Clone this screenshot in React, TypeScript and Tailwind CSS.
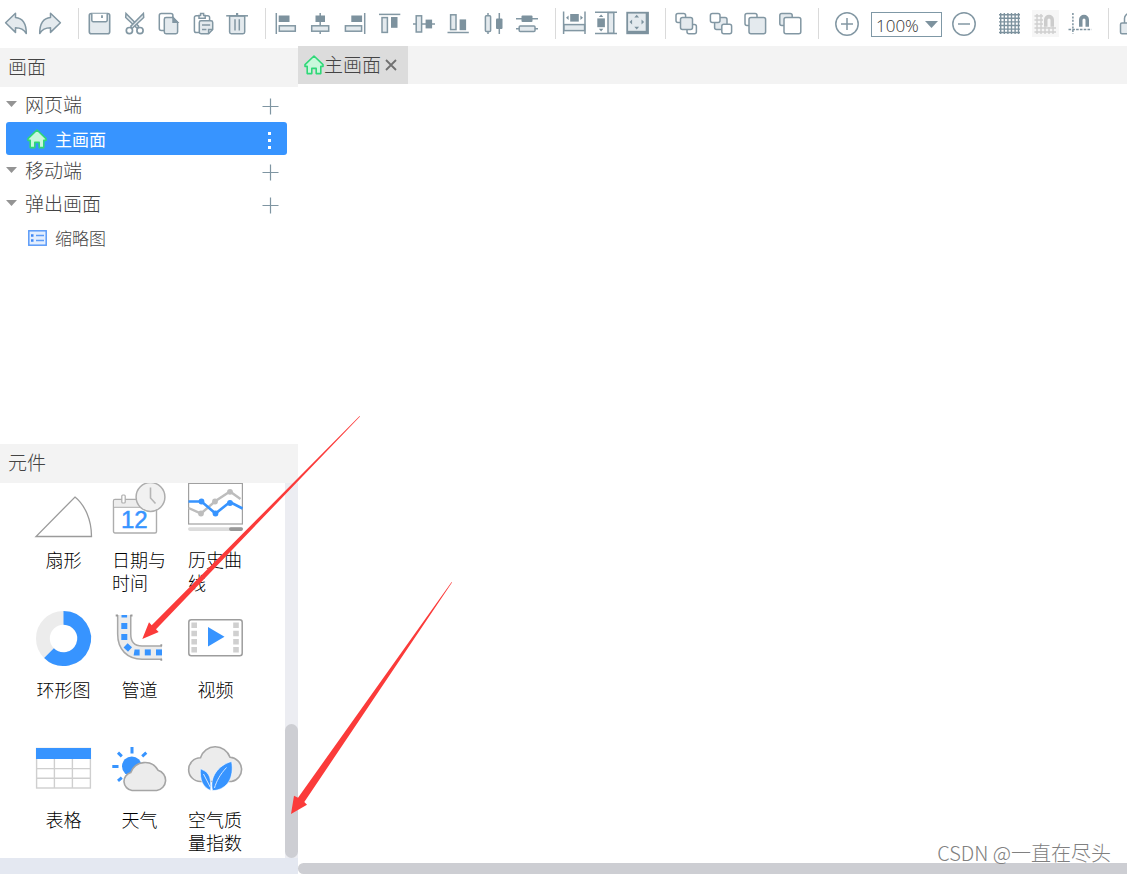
import React, { useState } from 'react';

const LINE = '#8297a3';
const SOFT = '#e4eaee';
const DARK = '#7d929e';

interface IconProps {
  children: React.ReactNode;
}

const Icon: React.FC<IconProps> = ({ children }) => (
  <svg
    viewBox="0 0 24 24"
    className="block h-6 w-6 overflow-visible"
    fill="none"
    stroke={LINE}
    strokeWidth="1.5"
    aria-hidden="true"
  >
    {children}
  </svg>
);

interface Tool {
  label: string;
  icon: React.ReactNode;
  disabled?: boolean;
}

const ARROW = 'M11.5 2.2V6.6C18 7.2 22.3 12 22.3 22.6C20 18.6 16.5 16.8 11.5 16.8V21.4L1.6 11.8Z';
const MAGNET = 'M11 15.7V8.7a5 5 0 0 1 10 0V15.7H17.5V9a1.5 1.5 0 0 0-3 0V15.7Z';

const historyTools: Tool[] = [
  { label: '撤销', icon: <path d={ARROW} fill={SOFT} strokeLinejoin="round" /> },
  { label: '重做', icon: <path d={ARROW} fill={SOFT} strokeLinejoin="round" transform="matrix(-1 0 0 1 24 0)" /> },
];

const editTools: Tool[] = [
  {
    label: '保存',
    icon: (
      <>
        <rect x="2.3" y="2.5" width="20.4" height="20.3" rx="2" fill={SOFT} strokeWidth="1.6" />
        <path d="M4.8 2.7V9.3a1.4 1.4 0 0 0 1.4 1.4H18.8a1.4 1.4 0 0 0 1.4-1.4V2.7" fill="#fff" />
        <path d="M15 4.2V7" strokeWidth="1.8" />
      </>
    ),
  },
  {
    label: '剪切',
    icon: (
      <>
        <path d="M4 2.4L3.7 6.5L15.6 17.8L16.6 15.2Z" fill={SOFT} />
        <path d="M21.4 2.4L21.7 6.5L9.8 17.8L8.8 15.2Z" fill={SOFT} />
        <circle cx="7.4" cy="19.6" r="3.1" fill="#fff" strokeWidth="1.7" />
        <circle cx="18" cy="19.6" r="3.1" fill="#fff" strokeWidth="1.7" />
      </>
    ),
  },
  {
    label: '复制',
    icon: (
      <>
        <rect x="3.3" y="2.5" width="13.6" height="17" rx="2" fill="#fff" />
        <path d="M10 6.6H17L21.6 11.2V21a1.7 1.7 0 0 1-1.7 1.7H10A1.7 1.7 0 0 1 8.3 21V8.3A1.7 1.7 0 0 1 10 6.6Z" fill={SOFT} />
        <path d="M17 6.6V11.2H21.6Z" fill={LINE} />
      </>
    ),
  },
  {
    label: '粘贴',
    icon: (
      <>
        <path d="M8.3 21.5H5.2A1.8 1.8 0 0 1 3.4 19.7V6.5A1.8 1.8 0 0 1 5.2 4.7H16.8A1.8 1.8 0 0 1 18.6 6.5V9.5" fill="#fff" />
        <path d="M8 7.3V4.6H9.6V2.6H12.6V4.6H14.2V7.3Z" fill="#fff" />
        <path d="M10 9.8H20a1.7 1.7 0 0 1 1.7 1.7V18.5L17.6 22.7H10A1.7 1.7 0 0 1 8.3 21V11.5A1.7 1.7 0 0 1 10 9.8Z" fill={SOFT} />
        <path d="M11 14H19.2M11 18.4H15.4M21.7 18.5H17.6V22.7" />
      </>
    ),
  },
  {
    label: '删除',
    icon: (
      <>
        <path d="M4.6 5V21a1.7 1.7 0 0 0 1.7 1.7H18A1.7 1.7 0 0 0 19.7 21V5Z" fill={SOFT} />
        <path d="M1.2 4.8H23" />
        <path d="M12.1 2V5" strokeWidth="2.2" />
        <path d="M10 8.3V19.6M14.3 8.3V19.6" />
      </>
    ),
  },
];

const alignTools: Tool[] = [
  {
    label: '左对齐',
    icon: (
      <>
        <path d="M2.3 2V23" />
        <rect x="4.7" y="4.5" width="10.8" height="6.5" fill={DARK} stroke="none" />
        <rect x="5.3" y="14.8" width="16" height="5.4" fill={SOFT} />
      </>
    ),
  },
  {
    label: '水平居中',
    icon: (
      <>
        <path d="M12.2 2V23" />
        <rect x="7.5" y="4.5" width="9.5" height="6.5" fill={DARK} stroke="none" />
        <rect x="3.7" y="14.8" width="17" height="5.4" fill={SOFT} />
      </>
    ),
  },
  {
    label: '右对齐',
    icon: (
      <>
        <path d="M21.7 2V23" />
        <rect x="8.3" y="4.5" width="10.8" height="6.5" fill={DARK} stroke="none" />
        <rect x="2.4" y="14.8" width="16.2" height="5.4" fill={SOFT} />
      </>
    ),
  },
  {
    label: '顶对齐',
    icon: (
      <>
        <path d="M2 3.4H23.3" />
        <rect x="5" y="6.6" width="5.4" height="14.8" fill={SOFT} />
        <rect x="14" y="6" width="6.5" height="10.8" fill={DARK} stroke="none" />
      </>
    ),
  },
  {
    label: '垂直居中',
    icon: (
      <>
        <path d="M1 13H23" />
        <rect x="4.2" y="4.8" width="5.4" height="16.2" fill={SOFT} />
        <rect x="13.6" y="8.6" width="6.5" height="8.8" fill={DARK} stroke="none" />
      </>
    ),
  },
  {
    label: '底对齐',
    icon: (
      <>
        <path d="M1.5 21.5H22.8" />
        <rect x="4.6" y="3.8" width="5.4" height="14.8" fill={SOFT} />
        <rect x="13.6" y="8.4" width="6.5" height="10.8" fill={DARK} stroke="none" />
      </>
    ),
  },
  {
    label: '水平分布',
    icon: (
      <>
        <path d="M7 2V23M18.3 2V23" />
        <rect x="4.4" y="4.8" width="5.2" height="15.6" rx="1" fill={SOFT} />
        <rect x="15" y="7.5" width="6.5" height="10.6" rx="1" fill={DARK} stroke="none" />
      </>
    ),
  },
  {
    label: '垂直分布',
    icon: (
      <>
        <path d="M1 7.8H23M1 17.7H23" />
        <rect x="6.5" y="4.6" width="11" height="6.4" rx="1" fill={DARK} stroke="none" />
        <rect x="4.2" y="15" width="15.8" height="5.4" rx="1" fill={SOFT} />
      </>
    ),
  },
];

const sizeTools: Tool[] = [
  {
    label: '等宽',
    icon: (
      <>
        <path d="M1.6 0.5V23M23 0.5V23" />
        <rect x="8.2" y="3" width="8.6" height="7.6" fill={DARK} stroke="none" />
        <path d="M4 6.8L6.6 4.6V9ZM21 6.8L18.4 4.6V9Z" fill={DARK} stroke="none" />
        <rect x="2" y="13.6" width="20.6" height="6" fill={SOFT} />
      </>
    ),
  },
  {
    label: '等高',
    icon: (
      <>
        <path d="M1 1.2H23M1 22.5H23" />
        <rect x="3.3" y="7.4" width="7.6" height="8.8" fill={DARK} stroke="none" />
        <path d="M7.1 3.4L9.3 6H4.9ZM7.1 20.4L9.3 17.7H4.9Z" fill={DARK} stroke="none" />
        <rect x="14" y="1.6" width="5.8" height="20.6" fill={SOFT} />
      </>
    ),
  },
  {
    label: '等宽等高',
    icon: (
      <>
        <rect x="0.3" y="0.8" width="22.6" height="22.4" fill={DARK} stroke="none" />
        <rect x="2.1" y="2.6" width="17.6" height="17.2" fill={SOFT} stroke="none" />
        <path
          d="M10.7 3.8L13.1 6.4H8.3ZM10.7 18.4L13.1 15.8H8.3ZM3.5 11L6.1 8.6V13.4ZM18.1 11L15.5 8.6V13.4Z"
          fill={DARK}
          stroke="none"
        />
      </>
    ),
  },
];

const layerTools: Tool[] = [
  {
    label: '上移一层',
    icon: (
      <>
        <rect x="2" y="2.4" width="9.6" height="9.2" rx="2" fill="#fff" />
        <rect x="13" y="13.5" width="9.4" height="9.2" rx="2" fill="#fff" />
        <rect x="6.5" y="6.6" width="12" height="12" rx="2" fill={SOFT} />
      </>
    ),
  },
  {
    label: '下移一层',
    icon: (
      <>
        <rect x="5.6" y="6.6" width="12.4" height="12" rx="2" fill={SOFT} />
        <rect x="1.4" y="2.4" width="9.6" height="9.2" rx="2" fill="#fff" />
        <rect x="12.8" y="13.3" width="9.8" height="9.4" rx="2" fill="#fff" />
      </>
    ),
  },
  {
    label: '置于顶层',
    icon: (
      <>
        <rect x="2" y="2.4" width="12" height="12" rx="2" fill="#fff" />
        <rect x="6" y="6.6" width="16.6" height="16.2" rx="2" fill={SOFT} />
      </>
    ),
  },
  {
    label: '置于底层',
    icon: (
      <>
        <rect x="1.8" y="2.4" width="12.4" height="12" rx="2" fill={SOFT} />
        <rect x="6" y="6.6" width="16.8" height="16.2" rx="2" fill="#fff" />
      </>
    ),
  },
];

const gridTools: Tool[] = [
  {
    label: '网格',
    icon: (
      <path
        d="M3.7 2V23M7.3 2V23M10.9 2V23M14.5 2V23M18.1 2V23M21.5 2V23M2 3.7H23M2 7.3H23M2 10.9H23M2 14.5H23M2 18.1H23M2 21.5H23"
        stroke={DARK}
        strokeWidth="1.4"
      />
    ),
  },
  {
    label: '吸附网格',
    disabled: true,
    icon: (
      <>
        <rect x="-1" y="-1" width="27" height="27" fill="#f6f6f6" stroke="none" />
        <path
          d="M4 3V23M8 3V23M12 16V23M16 16V23M20 16V23M1.5 5H10M1.5 9H10M1.5 13H10M1.5 17H23M1.5 21H23"
          stroke="#cfcfcf"
          strokeWidth="1.4"
        />
        <path d={MAGNET} fill="#cccccc" stroke="none" />
      </>
    ),
  },
  {
    label: '吸附对齐',
    icon: (
      <>
        <path d="M4.9 2V23" strokeDasharray="2 1.4" stroke={DARK} />
        <path d="M0.5 18.5H23.5" strokeDasharray="2.6 1.2" stroke={DARK} />
        <path d={MAGNET} fill={DARK} stroke="none" />
      </>
    ),
  },
];

const ToolGroup: React.FC<{ tools: Tool[]; className: string }> = ({ tools, className }) => (
  <div className={`flex shrink-0 items-center justify-between ${className}`}>
    {tools.map((tool) => (
      <button key={tool.label} type="button" aria-label={tool.label} disabled={tool.disabled} className="shrink-0">
        <Icon>{tool.icon}</Icon>
      </button>
    ))}
  </div>
);

const Divider: React.FC<{ className: string }> = ({ className }) => (
  <div className={`h-[31px] w-px shrink-0 bg-[#dadada] ${className}`} />
);

const Toolbar: React.FC = () => {
  const [zoom, setZoom] = useState('100%');

  return (
    <header className="flex h-[46px] shrink-0 items-center overflow-hidden pl-1">
      <ToolGroup tools={historyTools} className="w-[58px]" />
      <Divider className="mr-2 ml-4" />
      <ToolGroup tools={editTools} className="w-[162px]" />
      <Divider className="mr-2 ml-4" />
      <ToolGroup tools={alignTools} className="w-[265px]" />
      <Divider className="mr-1.5 ml-4" />
      <ToolGroup tools={sizeTools} className="w-[88px]" />
      <Divider className="mr-2 ml-[15px]" />
      <ToolGroup tools={layerTools} className="w-[128px]" />
      <Divider className="mr-4 ml-4" />

      {/* 缩放 */}
      <button type="button" aria-label="放大" className="shrink-0">
        <Icon>
          <circle cx="12" cy="13" r="11.2" />
          <path d="M6 13H18M12 7V19" />
        </Icon>
      </button>
      <div className="relative mx-3 mt-[3px] shrink-0">
        <select
          aria-label="缩放比例"
          value={zoom}
          onChange={(e) => setZoom(e.target.value)}
          className="block h-[25px] w-[71px] appearance-none border border-[#7f98a6] bg-white pl-1 font-['Open_Sans','Noto_Sans',sans-serif] text-[17px] leading-[25px] font-light text-[#333]"
        >
          <option>50%</option>
          <option>100%</option>
          <option>200%</option>
        </select>
        <svg viewBox="0 0 13 7" className="pointer-events-none absolute top-[9px] right-1 h-[7px] w-[13px]">
          <path d="M0 0H13L6.5 7Z" fill={DARK} />
        </svg>
      </div>
      <button type="button" aria-label="缩小" className="-ml-0.5 shrink-0">
        <Icon>
          <circle cx="12" cy="13" r="11.2" />
          <path d="M6 13H18" />
        </Icon>
      </button>

      <ToolGroup tools={gridTools} className="ml-[21px] w-[95px]" />
      <Divider className="mr-2.5 ml-4" />
      <button type="button" aria-label="锁定" className="shrink-0">
        <Icon>
          <rect x="1.5" y="12" width="20" height="10.8" rx="1.5" fill={SOFT} />
          <path d="M5.5 12V7.5a5 5 0 0 1 10 0" />
        </Icon>
      </button>
    </header>
  );
};

const HomeIcon: React.FC = () => (
  <svg viewBox="0 0 20 20" className="block h-5 w-5 shrink-0" aria-hidden="true">
    <path
      d="M10 1L19 9.6V11.4H16.8V18.6H12.2V13.4H7.8V18.6H3.2V11.4H1V9.6Z"
      fill="#c9f8dc"
      stroke="#2fd878"
      strokeWidth="1.6"
      strokeLinejoin="round"
    />
  </svg>
);

const PanelTitle: React.FC<{ title: string }> = ({ title }) => (
  <h2 className="h-[39px] shrink-0 bg-[#f3f3f3] pl-2 text-[19px] leading-9 text-[#444]">{title}</h2>
);

const TreeGroup: React.FC<{ title: string; children?: React.ReactNode }> = ({ title, children }) => {
  const [open, setOpen] = useState(true);

  return (
    <li>
      <div className="flex h-[33px] items-center justify-between">
        <button
          type="button"
          aria-expanded={open}
          onClick={() => setOpen(!open)}
          className="flex items-center gap-2 pb-1 text-[19px] leading-7 text-[#444]"
        >
          <svg viewBox="0 0 11 6" className="h-1.5 w-[11px]" aria-hidden="true">
            <path d="M0 0H11L5.5 6Z" fill="#949494" />
          </svg>
          {title}
        </button>
        <button type="button" aria-label={`新增${title}`} className="mt-0.5 mr-2">
          <svg viewBox="0 0 17 17" className="block h-[17px] w-[17px]">
            <path d="M8.5 0.5V16.5M0.5 8.5H16.5" stroke="#7f95a2" strokeWidth="1.2" />
          </svg>
        </button>
      </div>
      {open && children}
    </li>
  );
};

const ScreenTree: React.FC = () => (
  <ul className="min-h-0 flex-1 overflow-hidden pt-[2px] pr-[11px] pl-1.5">
    <TreeGroup title="网页端">
      <div className="flex h-[33px] items-center rounded-[3px] bg-[#3794ff] pl-[21px] text-[17px] font-normal text-white">
        <HomeIcon />
        <span className="ml-2 flex-1">主画面</span>
        <button type="button" aria-label="更多" className="flex w-9 flex-col items-center gap-1 pt-1">
          <span className="h-[3px] w-[3px] bg-white" />
          <span className="h-[3px] w-[3px] bg-white" />
          <span className="h-[3px] w-[3px] bg-white" />
        </button>
      </div>
    </TreeGroup>
    <TreeGroup title="移动端" />
    <TreeGroup title="弹出画面">
      <div className="flex h-[33px] items-center pl-[22px] text-[17px] text-[#444]">
        <svg viewBox="0 0 19 16" className="h-4 w-[19px]" aria-hidden="true">
          <rect x="0.8" y="0.8" width="17.4" height="14.4" fill="#e3eefe" stroke="#5b9bf8" strokeWidth="1.5" />
          <path d="M3 5.5H5.5M3 10.5H5.5" stroke="#3d86f5" strokeWidth="2.4" />
          <path d="M8 5.5H16M8 10.5H16" stroke="#5b9bf8" strokeWidth="1.3" />
        </svg>
        <span className="ml-2">缩略图</span>
      </div>
    </TreeGroup>
  </ul>
);

const widgets = [
  {
    label: '扇形',
    art: <path d="M0 55.5H55.5C55.5 39 49 24 39 16Z" fill="#fff" stroke="#9b9b9b" strokeWidth="1.3" />,
  },
  {
    label: '日期与时间',
    art: (
      <>
        <rect x="1.5" y="18.5" width="43" height="33.5" rx="1.5" fill="#fff" stroke="#adadad" strokeWidth="1.4" />
        <path d="M2.2 19.2H44V26H2.2Z" fill="#ededed" />
        <path d="M2 26.3H44" stroke="#adadad" />
        <rect x="9.8" y="14" width="3.4" height="8" rx="1" fill="#fff" stroke="#adadad" strokeWidth="1.2" />
        <circle cx="38.5" cy="16" r="14.4" fill="#f1f1f1" stroke="#adadad" strokeWidth="1.5" />
        <path d="M38.5 6.5V17L43.5 22.5" fill="none" stroke="#b5b5b5" strokeWidth="1.6" />
        <text
          x="9"
          y="47"
          fontSize="24"
          fill="#3794ff"
          stroke="#3794ff"
          strokeWidth="0.5"
          fontFamily="Liberation Sans, Arial, sans-serif"
        >
          12
        </text>
      </>
    ),
  },
  {
    label: '历史曲线',
    art: (
      <>
        <rect x="0.6" y="2.4" width="53.8" height="40.6" fill="#fff" stroke="#a0a0a0" strokeWidth="1.2" />
        <path d="M0.5 27L13 32.5L27.5 20L42 10.5L52.5 18" fill="none" stroke="#bdbdbd" strokeWidth="2.4" />
        <path d="M0.5 20.5H13.5L27.5 32.5L42 21L54.5 27.5" fill="none" stroke="#3794ff" strokeWidth="2.6" />
        <g fill="#bdbdbd">
          <circle cx="13" cy="32.5" r="2.9" />
          <circle cx="27" cy="20.5" r="2.9" />
          <circle cx="42" cy="10.8" r="2.9" />
        </g>
        <g fill="#3794ff">
          <circle cx="13.5" cy="20.5" r="2.9" />
          <circle cx="27.5" cy="32.5" r="2.9" />
          <circle cx="42" cy="22" r="2.9" />
        </g>
        <rect x="0" y="46.3" width="55" height="3.6" rx="1.8" fill="#dcdcdc" />
        <rect x="41" y="46.3" width="14" height="3.6" rx="1.8" fill="#999" />
      </>
    ),
  },
  {
    label: '环形图',
    art: (
      <>
        <circle cx="27.5" cy="27.5" r="20.6" fill="none" stroke="#ececec" strokeWidth="13.8" />
        <path d="M27.5 6.9A20.6 20.6 0 1 1 13 42.1" fill="none" stroke="#3794ff" strokeWidth="13.8" />
      </>
    ),
  },
  {
    label: '管道',
    art: (
      <>
        <path d="M12.2 4V23C12.2 35 19 41.6 30 41.6H50" fill="none" stroke="#a8a8a8" strokeWidth="14.6" />
        <path d="M12.2 4V23C12.2 35 19 41.6 30 41.6H50" fill="none" stroke="#ececec" strokeWidth="11.6" />
        <path d="M3.7 4.5H6M20.5 4.5H18.4M49.3 33.3V35.3M49.3 49.8V47.8" fill="none" stroke="#999" strokeWidth="1.8" />
        <g fill="#3794ff">
          <rect x="9.5" y="4" width="5.6" height="2.5" />
          <rect x="9.3" y="12" width="6" height="6" />
          <rect x="9.3" y="23" width="6" height="6" />
          <rect x="12.8" y="33.4" width="6" height="6" transform="rotate(42 15.8 36.4)" />
          <path d="M22.6 38.4H27.6V44.4H21.6Z" />
          <rect x="32.8" y="38.4" width="6" height="6" />
          <rect x="44" y="38.4" width="6" height="6" />
        </g>
      </>
    ),
  },
  {
    label: '视频',
    art: (
      <>
        <rect x="0.8" y="8.8" width="53.4" height="36" rx="2.5" fill="#fff" stroke="#9d9d9d" strokeWidth="1.5" />
        <g fill="#d0d0d0">
          <path d="M3.4 11.5H9V17H3.4ZM3.4 19.7H9V25.2H3.4ZM3.4 27.9H9V33.4H3.4ZM3.4 36H9V41.5H3.4Z" />
          <path d="M45.2 11.5H50.8V17H45.2ZM45.2 19.7H50.8V25.2H45.2ZM45.2 27.9H50.8V33.4H45.2ZM45.2 36H50.8V41.5H45.2Z" />
        </g>
        <path d="M20 16V35.5L36.5 25.8Z" fill="#3794ff" />
      </>
    ),
  },
  {
    label: '表格',
    art: (
      <>
        <rect x="0.6" y="7.5" width="53.8" height="39.5" fill="#fff" stroke="#cfcfcf" strokeWidth="1.4" />
        <path d="M0.6 27.6H54.4M0.6 37.2H54.4M18.4 18V47M36.4 18V47" stroke="#cfcfcf" strokeWidth="1.4" />
        <rect x="0" y="7" width="55" height="11" fill="#3794ff" />
      </>
    ),
  },
  {
    label: '天气',
    art: (
      <>
        <circle cx="19.8" cy="25.2" r="9.8" fill="#3794ff" />
        <path
          d="M20 6V12.4M34.3 11.7L30.2 15.3M6 11.7L9.8 15.3M0.3 25.4H6.5M6 39.8L9.8 36.6"
          stroke="#3794ff"
          strokeWidth="3"
        />
        <path
          d="M20 49.5a9.2 9.2 0 0 1-1.2-18A15 15 0 0 1 46 29.2A10.4 10.4 0 0 1 44.7 49.5Z"
          fill="#ececec"
          stroke="#a5a5a5"
          strokeWidth="1.6"
        />
      </>
    ),
  },
  {
    label: '空气质量指数',
    art: (
      <>
        <path
          d="M12.5 40.5A11.8 11.8 0 0 1 12.5 16.8A15.5 15.5 0 0 1 42 16.3A12.2 12.2 0 0 1 43.5 40.5Z"
          fill="#ececec"
          stroke="#a5a5a5"
          strokeWidth="1.6"
        />
        <path d="M12.4 27.8C20 31 23.5 34 22.6 49.5C14.5 46 11.8 39 12.4 27.8Z" fill="#3794ff" stroke="#fff" strokeWidth="0.6" />
        <path d="M43.6 20.5C46.5 36 39.5 49 24.6 49.6C21 37 30 24 43.6 20.5Z" fill="#3794ff" stroke="#fff" strokeWidth="0.6" />
        <path d="M15.5 33L22.2 46M38.5 26.5C32 33.5 28.5 40 26.5 47" fill="none" stroke="#d5e8ff" strokeWidth="1" />
      </>
    ),
  },
];

const WidgetPanel: React.FC = () => (
  <div className="flex h-[375px] shrink-0 justify-between overflow-hidden">
    <div className="-mt-[2px] ml-9 grid auto-rows-[130px] grid-cols-[repeat(3,55px)] gap-x-[21px]">
      {widgets.map((widget) => (
        <button
          key={widget.label}
          type="button"
          className="flex flex-col items-center gap-3 text-[18px] leading-[23px] text-black"
        >
          <svg viewBox="0 0 55 55" className="h-[55px] w-[55px] shrink-0 overflow-visible" aria-hidden="true">
            {widget.art}
          </svg>
          <span className="text-left">{widget.label}</span>
        </button>
      ))}
    </div>
    {/* 滚动条 */}
    <div className="flex w-[13px] flex-col justify-end bg-[#ecedf2]">
      <div className="h-[134px] rounded-full bg-[#cdced3]" />
    </div>
  </div>
);

const App: React.FC = () => (
  <div className="relative flex h-screen flex-col overflow-hidden bg-white font-['Noto_Sans_CJK_SC',sans-serif] font-light">
    <Toolbar />

    <div className="flex min-h-0 flex-1">
      <aside className="flex w-[298px] shrink-0 flex-col pt-[2px]">
        <PanelTitle title="画面" />
        <ScreenTree />
        <PanelTitle title="元件" />
        <WidgetPanel />
        <div className="h-4 shrink-0 bg-[#e4e8f1]" />
      </aside>

      <main className="flex min-w-0 flex-1 flex-col">
        <div className="flex h-[38px] shrink-0 bg-[#f3f3f3]">
          <div className="flex items-center bg-[#dcdcdc] pr-[11px] pl-1.5 text-[19px] text-[#444]">
            <HomeIcon />
            <span className="pb-0.5">主画面</span>
            <button type="button" aria-label="关闭" className="ml-1">
              <svg viewBox="0 0 12 12" className="h-3 w-3">
                <path d="M1 1L11 11M11 1L1 11" stroke="#707070" strokeWidth="1.8" />
              </svg>
            </button>
          </div>
        </div>
        <div className="min-h-0 flex-1" />
        <div className="h-[11px] shrink-0 rounded-l-full bg-[#cdced3]" />
      </main>
    </div>

    {/* 指示箭头 */}
    <svg viewBox="0 0 218 223" className="pointer-events-none absolute top-[416px] left-[142px] h-[223px] w-[218px]">
      <path d="M217.6 0L218 0.4L14 213.3L16.7 216L0.3 223L7 206.3L9.7 209.3Z" fill="#fb3b3a" />
    </svg>
    <svg viewBox="0 0 161 232" className="pointer-events-none absolute top-[582px] left-[291px] h-[232px] w-[161px]">
      <path d="M160.6 0L161 0.4L13.3 220L16 222.7L0 232L3 213.7L7 215.7Z" fill="#fb3b3a" />
    </svg>

    <p className="absolute right-4 bottom-[7px] text-[20px] leading-7 text-[#808080]">CSDN @一直在尽头</p>
  </div>
);

export default App;
